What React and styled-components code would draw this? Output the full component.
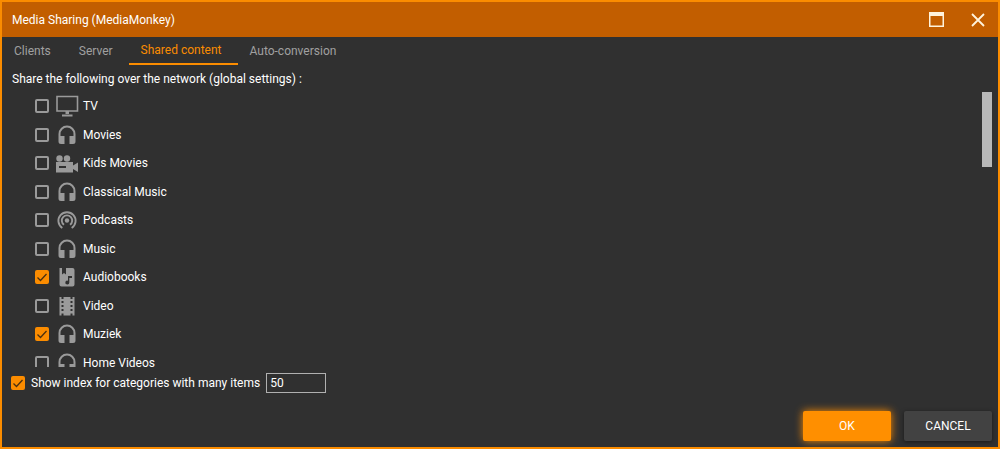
import React, { useState } from "react";
import styled, { createGlobalStyle } from "styled-components";

const GlobalStyle = createGlobalStyle`
  * {
    box-sizing: border-box;
  }
  body {
    margin: 0;
    background: #303030;
    color: #fff;
    font-family: Roboto, "Liberation Sans", sans-serif;
    font-size: 12px;
  }
`;

const Dialog = styled.div`
  min-height: 100vh;
  display: flex;
  flex-direction: column;
  border: 2px solid #fb8c00;
`;

const TitleBar = styled.header`
  height: 35px;
  padding: 0 12px 0 10px;
  display: flex;
  align-items: center;
  background: #c25e00;
`;

const Title = styled.h1`
  flex: 1;
  margin: 0;
  font-size: 12px;
  font-weight: 400;
`;

const WindowButton = styled.button`
  width: 16px;
  height: 16px;
  margin-left: 25px;
  padding: 0;
  border: 0;
  background: none;
  color: #fff3dc;
  svg {
    display: block;
  }
`;

const Tabs = styled.nav`
  display: flex;
  height: 28px;
`;

const Tab = styled.button`
  padding: 0 16px 0 12px;
  border: 0;
  border-bottom: ${(props) => (props.$active ? "2px solid #fb8c00" : "0")};
  background: none;
  color: ${(props) => (props.$active ? "#fb8c00" : "#a0a0a0")};
  font: inherit;
  line-height: 26px;
`;

const Intro = styled.p`
  margin: 0;
  padding: 4px 10px 0;
  line-height: 20px;
`;

const ListArea = styled.div`
  display: flex;
  justify-content: space-between;
  height: 275px;
  margin-top: 3px;
  padding: 0 6px 0 33px;
`;

const List = styled.ul`
  flex: 1;
  margin: 0;
  padding: 0;
  list-style: none;
  overflow: hidden;
  display: grid;
  grid-auto-rows: 28px 29px;
`;

const Row = styled.li`
  display: flex;
  align-items: center;
`;

const Label = styled.label`
  display: flex;
  align-items: center;
`;

const IconBox = styled.span`
  width: 24px;
  height: 24px;
  margin: 0 4px 0 6px;
  color: #9a9a9a;
  svg {
    display: block;
  }
`;

const Track = styled.div`
  width: 10px;
`;

const Thumb = styled.div`
  height: 75px;
  background: #b8b8b8;
`;

const CheckWrap = styled.span`
  display: grid;
  > * {
    grid-area: 1 / 1;
  }
  svg {
    pointer-events: none;
  }
`;

const CheckInput = styled.input`
  appearance: none;
  width: 14px;
  height: 14px;
  margin: 0;
  border: 2px solid #9a9a9a;
  border-radius: 2px;
  &:checked {
    border-color: #fb8c00;
    background: #fb8c00;
  }
`;

const IndexRow = styled.div`
  display: flex;
  align-items: center;
  gap: 6px;
  padding: 6px 9px 0;
`;

const IndexLabel = styled(Label)`
  gap: 6px;
`;

const NumberInput = styled.input`
  width: 60px;
  height: 20px;
  padding: 0 3px;
  border: 1px solid #b0b0b0;
  background: transparent;
  color: inherit;
  font: inherit;
`;

const Footer = styled.footer`
  display: flex;
  justify-content: flex-end;
  gap: 13px;
  margin-top: auto;
  padding: 0 6px 6px;
`;

const Button = styled.button`
  width: 88px;
  height: 30px;
  border: 0;
  border-radius: 2px;
  background: ${(props) => (props.$primary ? "#ff8f00" : "#424242")};
  box-shadow: ${(props) =>
    props.$primary ? "0 0 8px #fb8c00" : "0 1px 4px rgba(0, 0, 0, 0.5)"};
  color: #fff;
  font: inherit;
`;

const drawings = {
  tv: (
    <>
      <path d="M2 2.500h20.500v14.500H2z" fill="none" stroke="currentColor" strokeWidth="1.600" />
      <path d="M10.500 17h3.500v3h-3.500zM7 20.500h10.500v2H7z" />
    </>
  ),
  headset: (
    <path d="M12 2.500a8.500 8.500 0 0 0-8.500 8.500V18.500a2.500 2.500 0 0 0 2.500 2.500h3.500v-8H5.500v-2a6.500 6.500 0 0 1 13 0v2h-4v8h3.500a2.500 2.500 0 0 0 2.500-2.500V11A8.500 8.500 0 0 0 12 2.500z" />
  ),
  camera: (
    <>
      <path
        d="M1 11h17v3.500l5-3v9.500l-5-3v3.500H1zM4 15v2h7v-2z"
        fillRule="evenodd"
      />
      <circle cx="4.500" cy="7.500" r="3.200" />
      <circle cx="12" cy="7.500" r="3.200" />
    </>
  ),
  podcast: (
    <>
      <circle cx="12" cy="12.500" r="2.200" />
      <g fill="none" stroke="currentColor" strokeWidth="1.900">
        <path d="M9 16.800a5.200 5.200 0 1 1 6 0" />
        <path d="M7.300 20a8.600 8.600 0 1 1 9.400 0" />
      </g>
    </>
  ),
  audiobook: (
    <path
      fillRule="evenodd"
      d="M4.500 3H7v6.500l2-1.500 2 1.500V3h6.500a2 2 0 0 1 2 2v14.500a2 2 0 0 1-2 2H6.500a2 2 0 0 1-2-2zM13 11v4.700a2 2 0 1 0 1.300 1.900V13H17v-2z"
    />
  ),
  film: (
    <path
      fillRule="evenodd"
      d="M4.500 3h2v2h2V3h7v2h2V3h2v18.500h-2v-2h-2v2h-7v-2h-2v2h-2zM6.500 7v2h2V7zM6.500 11v2h2v-2zM6.500 15v2h2v-2zM15.500 7v2h2V7zM15.500 11v2h2v-2zM15.500 15v2h2v-2z"
    />
  ),
};

const items = [
  { name: "TV", icon: "tv" },
  { name: "Movies", icon: "headset" },
  { name: "Kids Movies", icon: "camera" },
  { name: "Classical Music", icon: "headset" },
  { name: "Podcasts", icon: "podcast" },
  { name: "Music", icon: "headset" },
  { name: "Audiobooks", icon: "audiobook", checked: true },
  { name: "Video", icon: "film" },
  { name: "Muziek", icon: "headset", checked: true },
  { name: "Home Videos", icon: "headset" },
];

const tabs = ["Clients", "Server", "Shared content", "Auto-conversion"];

const Checkbox = ({ defaultChecked = false }) => {
  const [checked, setChecked] = useState(defaultChecked);
  return (
    <CheckWrap>
      <CheckInput
        type="checkbox"
        checked={checked}
        onChange={(e) => setChecked(e.target.checked)}
      />
      {checked && (
        <svg width="14" height="14" viewBox="0 0 14 14">
          <path d="M2.500 7.500l3 3 6-6.500" fill="none" stroke="#4a3010" strokeWidth="1.300" />
        </svg>
      )}
    </CheckWrap>
  );
};

const App = () => {
  const [active, setActive] = useState("Shared content");
  return (
    <>
      <GlobalStyle />
      <Dialog>
        <TitleBar>
          <Title>Media Sharing (MediaMonkey)</Title>
          <WindowButton aria-label="Maximize">
            <svg width="16" height="16" viewBox="0 0 16 16" fill="currentColor">
              <path fillRule="evenodd" d="M0 0h15v15H0zM1.500 4v9.500h12V4z" />
            </svg>
          </WindowButton>
          <WindowButton aria-label="Close">
            <svg width="16" height="16" viewBox="0 0 16 16">
              <path d="M2 2l12 12M14 2L2 14" stroke="currentColor" strokeWidth="1.800" />
            </svg>
          </WindowButton>
        </TitleBar>
        <Tabs>
          {tabs.map((tab) => (
            <Tab key={tab} $active={tab === active} onClick={() => setActive(tab)}>
              {tab}
            </Tab>
          ))}
        </Tabs>
        <Intro>Share the following over the network (global settings) :</Intro>
        <ListArea>
          <List>
            {items.map((item) => (
              <Row key={item.name}>
                <Label>
                  <Checkbox defaultChecked={item.checked} />
                  <IconBox>
                    <svg width="24" height="24" viewBox="0 0 24 24" fill="currentColor">
                      {drawings[item.icon]}
                    </svg>
                  </IconBox>
                  {item.name}
                </Label>
              </Row>
            ))}
          </List>
          <Track>
            <Thumb />
          </Track>
        </ListArea>
        <IndexRow>
          <IndexLabel>
            <Checkbox defaultChecked />
            Show index for categories with many items
          </IndexLabel>
          <NumberInput type="text" defaultValue="50" aria-label="Number of items" />
        </IndexRow>
        <Footer>
          <Button $primary>OK</Button>
          <Button>CANCEL</Button>
        </Footer>
      </Dialog>
    </>
  );
};

export default App;
